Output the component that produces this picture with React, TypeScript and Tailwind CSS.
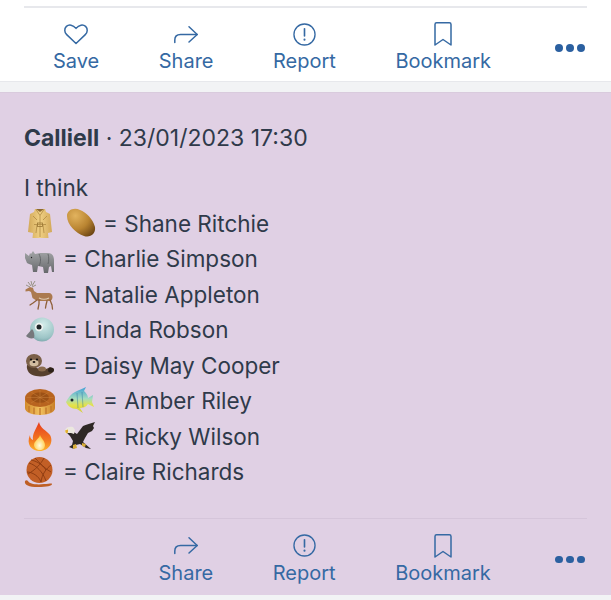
import type { ReactNode } from "react";

const BLUE = "#3569a3";

/* ------------------------------ emoji drawings ------------------------------ */

function Glyph({ children }: { children: ReactNode }) {
  return (
    <svg viewBox="0 0 30 30" className="h-[30px] w-[30px] shrink-0 overflow-visible">
      {children}
    </svg>
  );
}

const Coat = () => (
  <Glyph>
    <defs>
      <linearGradient id="coat" x1="0" y1="0" x2="1" y2="0">
        <stop offset="0" stopColor="#d2a858" />
        <stop offset="0.5" stopColor="#f0d084" />
        <stop offset="1" stopColor="#d2a858" />
      </linearGradient>
    </defs>
    <path d="M11 1h10l1 3 4 2 2 18-4 1-1-9 1.500 14H8.500L10 16l-1 9-5-1L6 6l4-2z" fill="url(#coat)" />
    <path d="M12 1.500l4 6 4-6M16 7.500V29M10 16.500h12M9 8l4 4M23 8l-4 4M13 17l-1 8M19 17l1 8" stroke="#b08a42" strokeWidth="0.8" fill="none" />
    <rect x="13.500" y="15" width="5" height="3.500" fill="none" stroke="#9a7534" strokeWidth="0.8" />
    <path d="M12 1h8l-4 3z" fill="#8d6a32" />
  </Glyph>
);

const Potato = () => (
  <Glyph>
    <defs>
      <radialGradient id="potato" cx="0.3" cy="0.25" r="0.9">
        <stop offset="0" stopColor="#e2b35e" />
        <stop offset="0.55" stopColor="#b98431" />
        <stop offset="1" stopColor="#6b4413" />
      </radialGradient>
    </defs>
    <path d="M3 8c0-6 7-9 13-6 6 2 13 9 15 17 1 7-5 11-11 9C12 25 3 17 3 8z" fill="url(#potato)" />
  </Glyph>
);

const Rhino = () => (
  <Glyph>
    <defs>
      <linearGradient id="rhino" x1="0" y1="0" x2="0" y2="1">
        <stop offset="0" stopColor="#a3a5a7" />
        <stop offset="1" stopColor="#66686b" />
      </linearGradient>
    </defs>
    <path d="M1 9l4 3 1-3 1 1 2-3 2 3 5-1h8c4 0 6 3 6 7l0 12h-2l-1-6-2 1-1 6h-4l-1-6-5-1-1 6h-4l-1-7-3-1-2-1-2-5z" fill="url(#rhino)" />
    <path d="M15 10c2 4 2 8 0 12M24 10c1 3 1 7 0 10" stroke="#5a5d60" strokeWidth="0.8" fill="none" />
    <circle cx="7.500" cy="13.500" r="0.7" fill="#222" />
  </Glyph>
);

const Deer = () => (
  <Glyph>
    <path d="M7 2l1 4M4 3l3 4M11 2l-3 5M2 6l4 2M12 6l-4 2" stroke="#8f8b79" strokeWidth="0.9" fill="none" />
    <path d="M1.500 10.500L6 8l3 1 1 3 3 2h12c2 0 3.500 2 3.500 4 0 2-1 3-2 4l-5 0-6 0-4-1-3-2-1.500-6-2-1-3.500 .5z" fill="#ab7a4f" />
    <path d="M26 21l2 5 .5 4M23 22l-1 4-.5 3M13 21l-4 3-3 2M15 21l0 4-1 5" stroke="#8f603a" strokeWidth="1.300" fill="none" strokeLinecap="round" />
    <path d="M15 19c3 1.500 7 1.500 10 0" stroke="#e0cdb3" strokeWidth="1.100" fill="none" />
  </Glyph>
);

const Bird = () => (
  <Glyph>
    <defs>
      <radialGradient id="bird" cx="0.55" cy="0.3" r="0.8">
        <stop offset="0" stopColor="#d3ecea" />
        <stop offset="0.7" stopColor="#9cc4c6" />
        <stop offset="1" stopColor="#6d9aa0" />
      </radialGradient>
    </defs>
    <circle cx="18" cy="14.500" r="12" fill="url(#bird)" />
    <path d="M2 21l6-7c2 2 3 6 2 9-3 1-6 0-8-2z" fill="#76787c" />
    <circle cx="15" cy="12" r="4.200" fill="#eef3f1" />
    <circle cx="15" cy="12" r="2.500" fill="#1e2428" />
  </Glyph>
);

const Otter = () => (
  <Glyph>
    <path d="M3 15c-1 6 3 10 9 11 6 1 12 0 16-3l2-4-4-2c-3 2-6 3-9 2-3 0-5-1-6-3z" fill="#57402d" />
    <ellipse cx="10" cy="11" rx="8" ry="7" fill="#7b6048" />
    <ellipse cx="10" cy="13" rx="4.500" ry="3.200" fill="#d2bda0" />
    <circle cx="7" cy="9.500" r="1.100" fill="#111" />
    <circle cx="13" cy="9.500" r="1.100" fill="#111" />
    <ellipse cx="10" cy="12" rx="1.400" ry="1" fill="#1f1713" />
    <ellipse cx="18" cy="19" rx="4" ry="2.500" fill="#8a6b4e" />
    <ellipse cx="27" cy="20" rx="3" ry="2.600" fill="#2d2119" />
  </Glyph>
);

const Mooncake = () => (
  <Glyph>
    <defs>
      <linearGradient id="cakeside" x1="0" y1="0" x2="1" y2="0">
        <stop offset="0" stopColor="#d28a2c" />
        <stop offset="0.5" stopColor="#f2c15e" />
        <stop offset="1" stopColor="#c97f28" />
      </linearGradient>
    </defs>
    <path d="M1 13v9c0 4 6 7 15 7s15-3 15-7v-9z" fill="url(#cakeside)" />
    <ellipse cx="16" cy="12" rx="15" ry="9" fill="#b8641f" />
    <ellipse cx="16" cy="11.500" rx="9" ry="5.200" fill="#9c5116" />
    <path d="M5 20v6M10 21.500v6.500M16 22v7M22 21.500v6.500M27 20v6" stroke="#c0762a" strokeWidth="1.300" />
    <path d="M16 3.500v16M7 6l18 11M25 6L7 17M2.500 11.500h27" stroke="#c9803a" strokeWidth="0.5" />
  </Glyph>
);

const Fish = () => (
  <Glyph>
    <defs>
      <linearGradient id="fish" x1="0" y1="0" x2="0" y2="1">
        <stop offset="0" stopColor="#3e9fd6" />
        <stop offset="0.45" stopColor="#a5dcc0" />
        <stop offset="0.7" stopColor="#e5e24a" />
        <stop offset="1" stopColor="#d2cd3a" />
      </linearGradient>
    </defs>
    <path d="M11 6c3-2 8-3 11-5l-2 4c2 2 4 4 4 7l5-3-1 7 2 5-6-3c-2 3-5 4-8 4l3 5-6-4C7 23 4 20 2 16c2-4 5-8 9-10z" fill="url(#fish)" />
    <circle cx="8" cy="14" r="1.500" fill="#18212b" />
    <path d="M13 7l1 15M18 6l1 15" stroke="#2c759e" strokeWidth="0.9" opacity="0.5" />
  </Glyph>
);

const Fire = () => (
  <Glyph>
    <defs>
      <linearGradient id="fire" x1="0" y1="0" x2="0" y2="1">
        <stop offset="0" stopColor="#e63a1d" />
        <stop offset="0.65" stopColor="#f37b20" />
        <stop offset="1" stopColor="#fdb52c" />
      </linearGradient>
      <radialGradient id="firecore" cx="0.5" cy="0.7" r="0.6">
        <stop offset="0" stopColor="#fffbe0" />
        <stop offset="1" stopColor="#ffc83c" />
      </radialGradient>
    </defs>
    <path d="M15 1c1 6 7 8 11 13 4 7-1 16-10 16S2 23 6 14c0 3 1 4 3 5-1-6 3-11 6-18z" fill="url(#fire)" />
    <path d="M16 14c1 3 5 6 5 10 0 3-2 5-5 5s-6-2-6-5c0-4 5-6 6-10z" fill="url(#firecore)" />
  </Glyph>
);

const Eagle = () => (
  <Glyph>
    <path d="M31 1l-2 4 1 2-2 3-4 2-3 5-2 4 8 7-5-1-6-4-4 1-2 4-5-2 3-2 1-4-3-5-4-4 6-1 5 3 6-8C22 4 27 2 31 1z" fill="#2e2825" />
    <path d="M1 9c1-3 5-4 8-3l2 3-1 4-3-1-3 0-3 1z" fill="#ece8df" />
    <path d="M1 9.500l3-1 0 3-2 1z" fill="#e4b02e" />
    <path d="M9 24l3-1 1 4-4 1zM18 22l4 1-1 3-3-1z" fill="#d9ad38" />
  </Glyph>
);

const Yarn = () => (
  <Glyph>
    <circle cx="15.500" cy="13" r="13" fill="#c25f26" />
    <path d="M5 6c7 2 14 9 17 18M11 1c5 5 10 11 16 14M3 15c5 0 12 4 14 10M20 1c-3 6-9 12-16 16M27 8c-5 4-9 9-10 17M7 3c5 1 11 4 15 10" stroke="#8a3a11" strokeWidth="0.9" fill="none" />
    <path d="M1 24c-1 4 4 6 13 6s14-1 14-3c0-1-3 0-8 0-7 1-15 0-16-3-1-1-2-1-3 0z" fill="#bf5f25" />
  </Glyph>
);

/* ------------------------------- action icons ------------------------------- */

function Heart() {
  return (
    <svg viewBox="0 0 24 20" className="h-[20px] w-[24px] overflow-visible" fill="none" stroke={BLUE} strokeWidth="1.500" strokeLinejoin="round">
      <path d="M12 19.500 2.700 10.600C.2 8.200.2 4.600 2.400 2.400 5 .1 9 .7 12 4.400c3-3.700 7-4.300 9.600-2 2.200 2.200 2.200 5.800-.3 8.200L12 19.500z" />
    </svg>
  );
}

function ShareArrow() {
  return (
    <svg viewBox="0 0 24 17" className="h-[17px] w-[24px] overflow-visible" fill="none" stroke={BLUE} strokeWidth="1.500" strokeLinecap="round" strokeLinejoin="round">
      <path d="M.8 16.500V14c0-3.300 2.300-5.500 5.700-5.500h16.700" />
      <path d="M15 .8l8.200 7.700L15 16" />
    </svg>
  );
}

function ReportCircle() {
  return (
    <svg viewBox="0 0 24 24" className="h-[23px] w-[23px]" fill="none" stroke={BLUE} strokeWidth="1.400" strokeLinecap="round">
      <circle cx="12" cy="12" r="11" />
      <path d="M12 6v7.500" strokeWidth="1.700" />
      <circle cx="12" cy="17.400" r="0.5" strokeWidth="1.200" />
    </svg>
  );
}

function BookmarkIcon() {
  return (
    <svg viewBox="0 0 18 24" className="h-[24px] w-[18px]" fill="none" stroke={BLUE} strokeWidth="1.500" strokeLinejoin="round">
      <path d="M1 23V2.500C1 1.500 1.600.8 2.600.8h12.800c1 0 1.600.7 1.600 1.700V23l-8-5.500L1 23z" />
    </svg>
  );
}

function Action({ icon, label }: { icon: ReactNode; label: string }) {
  return (
    <div className="flex flex-col items-center">
      <div className="flex h-[24px] items-center justify-center">{icon}</div>
      <span className="mt-[3px] text-[20px] leading-[24px] text-[#3569a3]">{label}</span>
    </div>
  );
}

function Dots() {
  return (
    <div className="absolute left-[555px] top-[22px] flex gap-[3.5px]">
      <span className="h-[7.5px] w-[7.5px] rounded-full bg-[#2b60a0]" />
      <span className="h-[7.5px] w-[7.5px] rounded-full bg-[#2b60a0]" />
      <span className="h-[7.5px] w-[7.5px] rounded-full bg-[#2b60a0]" />
    </div>
  );
}

function ActionBar({ withSave }: { withSave?: boolean }) {
  return (
    <div className={`relative flex h-[52px] items-start gap-[59.5px] ${withSave ? "pl-[53px]" : "pl-[158.5px]"}`}>
      {withSave && <Action icon={<Heart />} label="Save" />}
      <Action icon={<ShareArrow />} label="Share" />
      <Action icon={<ReportCircle />} label="Report" />
      <Action icon={<BookmarkIcon />} label="Bookmark" />
      <Dots />
    </div>
  );
}

const lines: { emoji: ReactNode[]; name: string }[] = [
  { emoji: [<Coat />, <Potato />], name: "Shane Ritchie" },
  { emoji: [<Rhino />], name: "Charlie Simpson" },
  { emoji: [<Deer />], name: "Natalie Appleton" },
  { emoji: [<Bird />], name: "Linda Robson" },
  { emoji: [<Otter />], name: "Daisy May Cooper" },
  { emoji: [<Mooncake />, <Fish />], name: "Amber Riley" },
  { emoji: [<Fire />, <Eagle />], name: "Ricky Wilson" },
  { emoji: [<Yarn />], name: "Claire Richards" },
];

export default function App() {
  return (
    <div className="h-[600px] w-[611px] overflow-hidden bg-[#f2f3f5] font-['Inter',sans-serif] text-[#2f3a4a]">
      <div className="h-[82px] border-b border-[#e7e8ec] bg-white pt-[6px]">
        <div className="mx-[24px] h-[2px] bg-[#e7e8ec]" />
        <div className="pt-[14px]">
          <ActionBar withSave />
        </div>
      </div>
      <div className="mt-[10px] h-[503px] border-t border-[#d9cbdd] bg-[#e0d0e4] pt-[31px]">
        <div className="px-[24px] text-[23px] leading-[28px]">
          <span className="font-bold">Calliell</span> · 23/01/2023 17:30
        </div>
        <div className="mt-[18px] px-[24px] text-[22.5px] leading-[35.5px]">
          <div>I think</div>
          {lines.map((l) => (
            <div key={l.name} className="flex h-[35.5px] items-center">
              {l.emoji.map((e, i) => (
                <div key={i} className="mr-[10px] flex">
                  {e}
                </div>
              ))}
              <span className="ml-[-1px]">= {l.name}</span>
            </div>
          ))}
        </div>
        <div className="mx-[24px] mt-[28px] h-[1px] bg-[#d5c5da]" />
        <div className="pt-[15px]">
          <ActionBar />
        </div>
      </div>
    </div>
  );
}
